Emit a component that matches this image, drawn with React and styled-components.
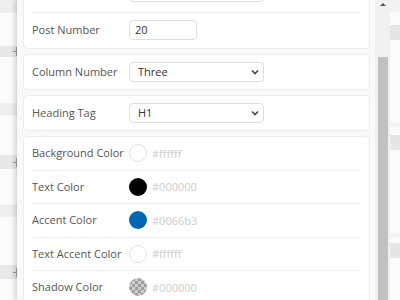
import React, {useLayoutEffect, useRef} from "react";
import styled, {createGlobalStyle} from "styled-components";

const GlobalStyle = createGlobalStyle`
  body {
    margin: 0;
    overflow: hidden;
    font-family: "Open Sans", "Liberation Sans", sans-serif;
  }
`

const Screen = styled.div`
  display: flex;
  width: 400px;
  height: 300px;
  overflow: hidden;
  background: #fff;
`

const Rail = styled.div`
  display: flex;
  flex-direction: column;
  width: ${p => p.$w}px;
  flex-shrink: 0;
  background: #fbfbfb;
`

const Band = styled.div`
  height: ${p => p.$h}px;
  flex-shrink: 0;
  background: ${p => p.$c || "transparent"};
  display: flex;
  align-items: center;
  justify-content: flex-end;
`

const Tick = styled.span`
  position: relative;
  width: 4px;
  height: 1px;
  background: #8a8a8a;
  &::after {
    content: "";
    position: absolute;
    right: 0;
    top: -4px;
    width: 1px;
    height: 9px;
    background: #8a8a8a;
  }
`

const Panel = styled.div`
  display: flex;
  width: 373px;
  height: 300px;
  flex-shrink: 0;
  background: #f9f9f9;
  box-shadow: -2px 0 5px rgba(0, 0, 0, 0.18);
`

const Content = styled.div`
  flex: 1;
  overflow: hidden;
  padding: 6px 5px 6px 6px;
  display: flex;
  flex-direction: column;
  gap: 5px;
`

const Card = styled.div`
  background: #fff;
  border: 1px solid #ececec;
  border-radius: 4px;
  padding: 0 8px;
  flex-shrink: 0;
`

const Row = styled.div`
  display: flex;
  align-items: center;
  padding: ${p => p.$pad || "7px 0"};
  border-bottom: 1px solid #eeeeee;
  &:last-child {
    border-bottom: none;
  }
`

const ColorRow = styled.div`
  display: flex;
  align-items: center;
  height: 32.5px;
  border-bottom: 1px solid #eeeeee;
  &:last-child {
    border-bottom: none;
  }
`

const Label = styled.div`
  width: 97px;
  flex-shrink: 0;
  font-size: 11px;
  line-height: 14px;
  white-space: nowrap;
  color: #555;
`

const Select = styled.div`
  box-sizing: border-box;
  width: 135px;
  height: 20px;
  border: 1px solid #dedede;
  border-radius: 4px;
  display: flex;
  align-items: center;
  justify-content: space-between;
  padding: 0 4px 0 8px;
  font-size: 11px;
  line-height: 14px;
  color: #333;
`

const Input = styled.div`
  box-sizing: border-box;
  width: ${p => p.$w || 68}px;
  height: 20px;
  border: 1px solid #dedede;
  border-radius: 4px;
  display: flex;
  align-items: center;
  padding: 0 5px;
  font-size: 11px;
  line-height: 14px;
  color: #333;
`

const Swatch = styled.span`
  width: 18px;
  height: 18px;
  border-radius: 50%;
  box-sizing: border-box;
  margin-right: 5px;
  flex-shrink: 0;
  background: ${p => p.$color};
  border: ${p => (p.$color === "#ffffff" ? "1px solid #e3e3e3" : "none")};
  ${p => p.$checker && `
    background: repeating-conic-gradient(#9e9e9e 0 25%, #cfcfcf 0 50%) 0 0 / 6px 6px;
  `}
`

const Hex = styled.span`
  font-size: 11px;
  color: #cccccc;
`

const ScrollTrack = styled.div`
  width: 15px;
  flex-shrink: 0;
  background: #f1f1f1;
  display: flex;
  flex-direction: column;
  align-items: center;
`

const ArrowUp = styled.div`
  margin-top: 3px;
  width: 0;
  height: 0;
  border-left: 3px solid transparent;
  border-right: 3px solid transparent;
  border-bottom: 3px solid #505050;
`

const Thumb = styled.div`
  margin-top: 51px;
  width: 10px;
  align-self: flex-end;
  margin-right: 2px;
  flex: 1;
  background: #c1c1c1;
`

const Chevron = () => (
    <svg width="8" height="6" viewBox="0 0 8 6">
        <path d="M1 1.5 L4 4.5 L7 1.5" fill="none" stroke="#444" strokeWidth="1.6"/>
    </svg>
)

const leftBands = [
    [13, "#eeeeee"], [33], [11, "#e8e8e8", true], [46], [12, "#eeeeee"], [40],
    [14, "#e8e8e8", true], [36], [12, "#eeeeee"], [48], [14, "#e8e8e8", true], [21]
]

const rightBands = [
    [12, "#f3f3f3"], [13], [15, "#e6e6e6"], [83], [4, "#f3f3f3"], [8],
    [15, "#e6e6e6"], [83], [4, "#f3f3f3"], [6], [15, "#e6e6e6"], [42]
]

const colors = [
    {label: "Background Color", value: "#ffffff"},
    {label: "Text Color", value: "#000000"},
    {label: "Accent Color", value: "#0066b3"},
    {label: "Text Accent Color", value: "#ffffff"},
    {label: "Shadow Color", value: "#000000", checker: true},
]

const App = () => {
    const contentRef = useRef(null);
    useLayoutEffect(() => {
        if (contentRef.current) contentRef.current.scrollTop = 33;
    }, []);

    return (
        <Screen>
            <GlobalStyle/>
            <Rail $w={17}>
                {leftBands.map(([h, c, tick], i) => (
                    <Band key={i} $h={h} $c={c}>{tick && <Tick/>}</Band>
                ))}
            </Rail>
            <Panel>
                <Content ref={contentRef}>
                    <Card>
                        <Row $pad="8px 0 10px">
                            <Label/>
                            <Input $w={135}/>
                        </Row>
                        <Row $pad="7px 0 8px">
                            <Label>Post Number</Label>
                            <Input>20</Input>
                        </Row>
                    </Card>
                    <Card>
                        <Row>
                            <Label>Column Number</Label>
                            <Select>Three<Chevron/></Select>
                        </Row>
                    </Card>
                    <Card>
                        <Row>
                            <Label>Heading Tag</Label>
                            <Select>H1<Chevron/></Select>
                        </Row>
                    </Card>
                    <Card>
                        {colors.map(c => (
                            <ColorRow key={c.label}>
                                <Label>{c.label}</Label>
                                <Swatch $color={c.value} $checker={c.checker}/>
                                <Hex>{c.value}</Hex>
                            </ColorRow>
                        ))}
                    </Card>
                </Content>
                <ScrollTrack>
                    <ArrowUp/>
                    <Thumb/>
                </ScrollTrack>
            </Panel>
            <Rail $w={10}>
                {rightBands.map(([h, c], i) => (
                    <Band key={i} $h={h} $c={c}/>
                ))}
            </Rail>
        </Screen>
    );
}

export default App;
